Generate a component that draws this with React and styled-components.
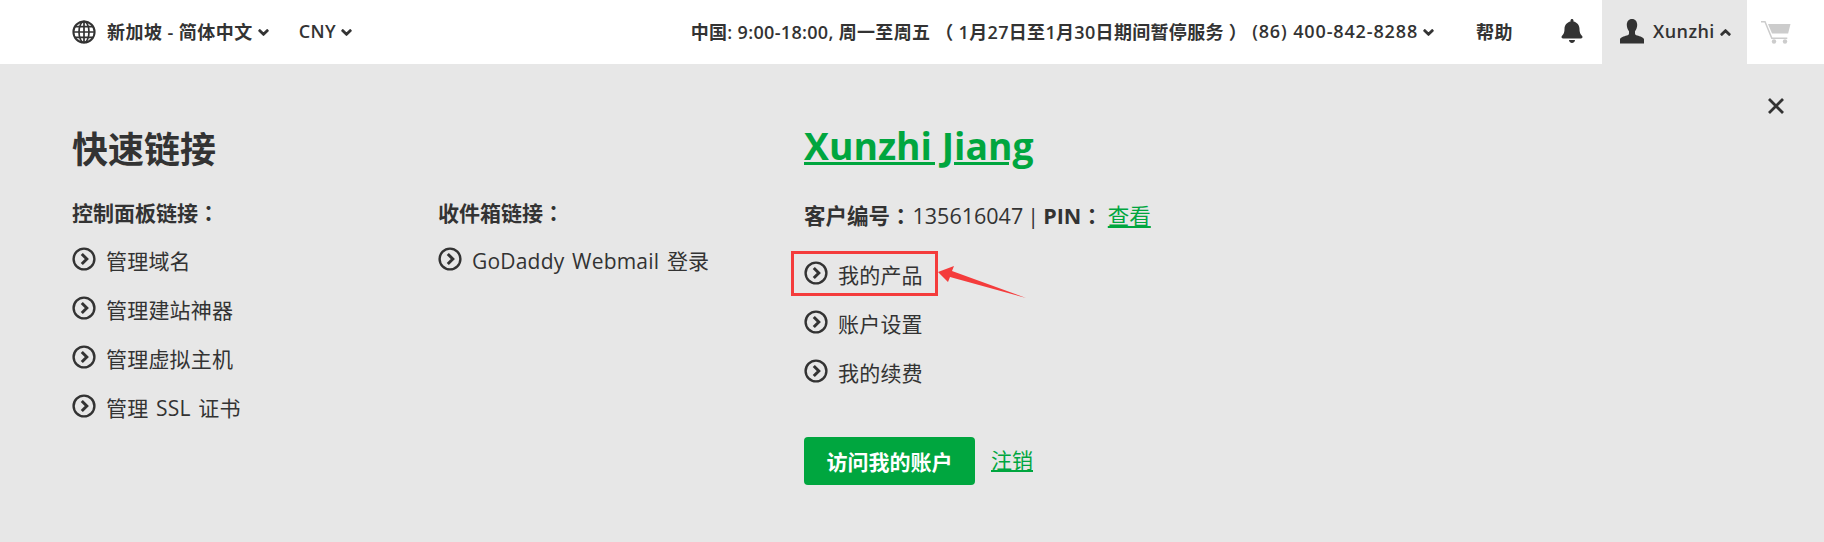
import styled, { createGlobalStyle } from "styled-components";
import { FaBell, FaChevronDown, FaChevronUp } from "react-icons/fa";

const GREEN = "#00a63f";
const INK = "#333333";

const Global = createGlobalStyle`
  html, body {
    margin: 0;
    padding: 0;
    background: #e6e6e6;
  }
  body {
    font-family: "Open Sans", "Noto Sans CJK SC", sans-serif;
    color: ${INK};
  }
`;

const Page = styled.div`
  width: 1824px;
  height: 542px;
  overflow: hidden;
  background: #e7e7e7;
`;

const TopBar = styled.header`
  height: 64px;
  background: #fff;
  display: flex;
  align-items: stretch;
  justify-content: space-between;
  padding-left: 72px;
  font-size: 18px;
  font-weight: 600;
  letter-spacing: 0.45px;
`;

const BarGroup = styled.div`
  display: flex;
  align-items: center;
`;

const BarItem = styled.div`
  display: flex;
  align-items: center;
  margin-left: ${(p) => p.$gap || 0}px;
  white-space: nowrap;
  padding-bottom: 2px;
`;

const Hours = styled.span`
  letter-spacing: 0.32px;
  white-space: pre;
`;

const Phone = styled.span`
  letter-spacing: 0.87px;
`;

const Caret = styled.span`
  display: inline-flex;
  margin-left: 5px;
  font-size: 11px;
  margin-top: 3px;

  svg {
    stroke-width: 50px;
  }
`;

const AccountTab = styled.div`
  align-self: stretch;
  width: 145px;
  margin-left: 18px;
  background: #e7e7e7;
  display: flex;
  align-items: center;
  padding-left: 17px;
  box-sizing: border-box;
  padding-bottom: 2px;
`;

const CartCell = styled.div`
  width: 77px;
  display: flex;
  align-items: center;
  padding-left: 14px;
  box-sizing: border-box;
`;

const Panel = styled.main`
  position: relative;
  display: grid;
  grid-template-columns: 366px 366px 1fr;
  padding: 60px 72px 0;
`;

const CloseButton = styled.button`
  position: absolute;
  top: 33px;
  right: 39px;
  width: 18px;
  height: 18px;
  padding: 0;
  border: 0;
  background: none;
  color: ${INK};
`;

const Column = styled.section`
  display: flex;
  flex-direction: column;
  padding-top: ${(p) => p.$top || 0}px;
`;

const Heading = styled.h2`
  margin: 4px 0 25px;
  font-size: 36px;
  line-height: 44px;
  font-weight: 700;
`;

const Name = styled.a`
  font-size: 37.300px;
  line-height: 44px;
  font-weight: 700;
  color: ${GREEN};
  text-decoration: underline;
  margin-bottom: 32px;
`;

const Label = styled.div`
  font-size: 21px;
  line-height: 30px;
  font-weight: 700;
  margin-bottom: 7px;
`;

const Colon = styled.span`
  font-family: "Noto Sans CJK TC", sans-serif;
`;

const Customer = styled.div`
  font-size: 21.500px;
  line-height: 30px;
  margin-bottom: 18px;
  word-spacing: -1.500px;

  b {
    font-weight: 700;
    margin-right: 1px;
  }
  a {
    margin-left: 4px;
    color: ${GREEN};
    text-decoration: underline;
  }
`;

const LinkRow = styled.div`
  position: relative;
  display: flex;
  align-items: center;
  height: ${(p) => p.$height || 49}px;
  font-size: 21px;
  letter-spacing: 0.2px;
  word-spacing: 2px;
  white-space: pre;
`;

const Highlight = styled.span`
  position: absolute;
  left: -13px;
  top: 2px;
  width: 147px;
  height: 45px;
  box-sizing: border-box;
  border: 3px solid #f43c3c;
`;

const Arrow = styled.svg`
  position: absolute;
  left: 133px;
  top: 16px;
`;

const Chevron = styled.svg`
  width: 24px;
  height: 24px;
  margin-right: 10px;
  flex: none;
  margin-top: -2px;
`;

const Actions = styled.div`
  display: flex;
  align-items: center;
  margin-top: 41px;
`;

const PrimaryButton = styled.button`
  width: 171px;
  height: 48px;
  border: 0;
  border-radius: 4px;
  background: ${GREEN};
  color: #fff;
  font: 700 21px "Open Sans", "Noto Sans CJK SC", sans-serif;
`;

const Logout = styled.a`
  margin-left: 16px;
  margin-top: -4px;
  font-size: 21px;
  color: ${GREEN};
  text-decoration: underline;
`;

const Globe = () => (
  <svg width="24" height="24" viewBox="0 0 24 24" fill="none" stroke={INK} strokeWidth="1.700" style={{ marginRight: 11 }}>
    <circle cx="12" cy="12" r="10.600" strokeWidth="2" />
    <ellipse cx="12" cy="12" rx="5" ry="10.600" />
    <path d="M12 1.400v21.200M1.400 12h21.200M3 6.600h18M3 17.400h18" />
  </svg>
);

const Person = () => (
  <svg width="26" height="26" viewBox="0 0 26 26" fill={INK} style={{ marginRight: 8 }}>
    <path d="M13 1c3.400 0 5.200 2.600 5.200 6 0 2.600-1 4.800-2.200 6.200v2.200c0 1 .8 1.600 2.200 2.100 3 1 6.300 1.700 6.800 3.700V25.500H1v-4.300c.5-2 3.800-2.700 6.800-3.700 1.400-.5 2.200-1.100 2.200-2.100v-2.200C8.800 11.800 7.800 9.600 7.800 7c0-3.400 1.800-6 5.200-6z" />
  </svg>
);

const Cart = () => (
  <svg width="30" height="24" viewBox="0 0 30 24" fill="#cccccc">
    <path d="M0 1h4.500l6.800 16.500h15v1.500H10.300L3.500 2.500H0z" />
    <path d="M7 4h22.500l-2.400 9.500H11z" />
    <circle cx="13" cy="21.500" r="2.200" />
    <circle cx="24" cy="21.500" r="2.200" />
  </svg>
);

const CircleChevron = () => (
  <Chevron viewBox="0 0 24 24" fill="none" stroke={INK}>
    <circle cx="12" cy="12" r="10.400" strokeWidth="2.400" />
    <path d="M9.800 7l5 5-5 5" strokeWidth="3" />
  </Chevron>
);

const ListLink = ({ children, marked }) => (
  <LinkRow>
    {marked && <Highlight />}
    {marked && (
      <Arrow width="94" height="36" viewBox="0 0 94 36" fill="#f43c3c">
        <path d="M1 7L17 1l-2 5 74 27-76-21-2 5z" />
      </Arrow>
    )}
    <CircleChevron />
    {children}
  </LinkRow>
);

export default function App() {
  return (
    <Page>
      <Global />
      <TopBar>
        <BarGroup>
          <Globe />
          <BarItem>
            新加坡 - 简体中文
            <Caret><FaChevronDown /></Caret>
          </BarItem>
          <BarItem $gap={30}>
            CNY
            <Caret><FaChevronDown /></Caret>
          </BarItem>
        </BarGroup>
        <BarGroup>
          <BarItem>
            <Hours>中国: 9:00-18:00, 周一至周五 （ 1月27日至1月30日期间暂停服务 ） </Hours>
            <Phone>(86) 400-842-8288</Phone>
            <Caret><FaChevronDown /></Caret>
          </BarItem>
          <BarItem $gap={42}>帮助</BarItem>
          <BarItem $gap={47}><FaBell size={24} /></BarItem>
          <AccountTab>
            <Person />
            Xunzhi
            <Caret><FaChevronUp /></Caret>
          </AccountTab>
          <CartCell><Cart /></CartCell>
        </BarGroup>
      </TopBar>
      <Panel>
        <CloseButton aria-label="关闭">
          <svg width="18" height="18" viewBox="0 0 18 18" stroke={INK} strokeWidth="2.800">
            <path d="M2 2l14 14M16 2L2 16" />
          </svg>
        </CloseButton>
        <Column>
          <Heading>快速链接</Heading>
          <Label>控制面板链接<Colon>：</Colon></Label>
          <ListLink>管理域名</ListLink>
          <ListLink>管理建站神器</ListLink>
          <ListLink>管理虚拟主机</ListLink>
          <ListLink>管理 SSL 证书</ListLink>
        </Column>
        <Column $top={73}>
          <Label>收件箱链接<Colon>：</Colon></Label>
          <ListLink>GoDaddy Webmail 登录</ListLink>
        </Column>
        <Column>
          <Name>Xunzhi Jiang</Name>
          <Customer>
            <b>客户编号<Colon>：</Colon></b>135616047 | <b>PIN<Colon>：</Colon></b><a>查看</a>
          </Customer>
          <ListLink marked>我的产品</ListLink>
          <ListLink>账户设置</ListLink>
          <ListLink>我的续费</ListLink>
          <Actions>
            <PrimaryButton>访问我的账户</PrimaryButton>
            <Logout>注销</Logout>
          </Actions>
        </Column>
      </Panel>
    </Page>
  );
}
